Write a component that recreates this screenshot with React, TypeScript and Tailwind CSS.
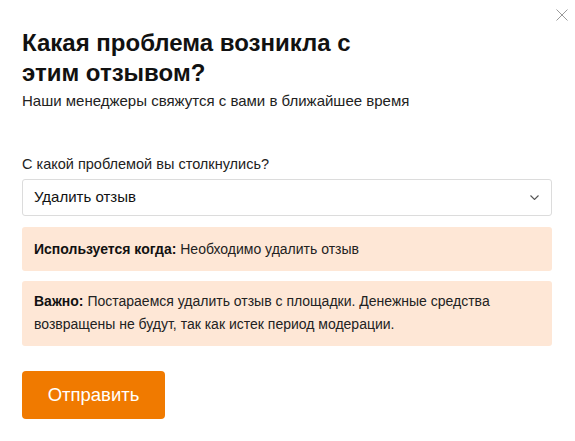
import React from "react";

export default function App() {
  return (
    <div className="relative w-[575px] h-[441px] bg-white text-black" style={{ fontFamily: '"Liberation Sans", Arial, sans-serif' }}>
      <button className="absolute right-[7px] top-[9px] w-[12px] h-[12px]">
        <svg width="12" height="12" viewBox="0 0 12 12">
          <path d="M0.5 0.5 L11.5 11.5 M11.5 0.5 L0.5 11.5" stroke="#9a9a9a" strokeWidth="1" />
        </svg>
      </button>
      <div className="pl-[22px] pr-[23px] pt-[28px] w-full">
        <h1 className="text-[24px] leading-[30px] font-bold text-[#111] w-[360px]">Какая проблема возникла с этим отзывом?</h1>
        <p className="mt-[4px] text-[15px] leading-[18px] text-[#222]">Наши менеджеры свяжутся с вами в ближайшее время</p>
        <p className="mt-[45px] text-[14.5px] leading-[18px] text-[#222]">С какой проблемой вы столкнулись?</p>
        <div className="mt-[6px] h-[37px] border border-[#dcdcdc] rounded-[3px] flex items-center justify-between pl-[11px] pr-[12px]">
          <span className="text-[15px] text-[#111]">Удалить отзыв</span>
          <svg width="9" height="5" viewBox="0 0 9 5">
            <path d="M0.5 0.5 L4.5 4.5 L8.5 0.5" fill="none" stroke="#555" strokeWidth="1.1" />
          </svg>
        </div>
        <div className="mt-[11px] bg-[#fee7d6] rounded-[3px] px-[12px] py-[12px] text-[14px] leading-[20px] text-[#222]">
          <b className="text-[#111]">Используется когда:</b> Необходимо удалить отзыв
        </div>
        <div className="mt-[10px] bg-[#fee7d6] rounded-[3px] px-[12px] pt-[9px] pb-[10px] text-[14px] leading-[23px] text-[#222]">
          <b className="text-[#111]">Важно:</b> Постараемся удалить отзыв с площадки. Денежные средства возвращены не будут, так как истек период модерации.
        </div>
        <button className="mt-[25px] w-[143px] h-[48px] bg-[#f07a00] rounded-[4px] text-white text-[18.5px]">Отправить</button>
      </div>
    </div>
  );
}
